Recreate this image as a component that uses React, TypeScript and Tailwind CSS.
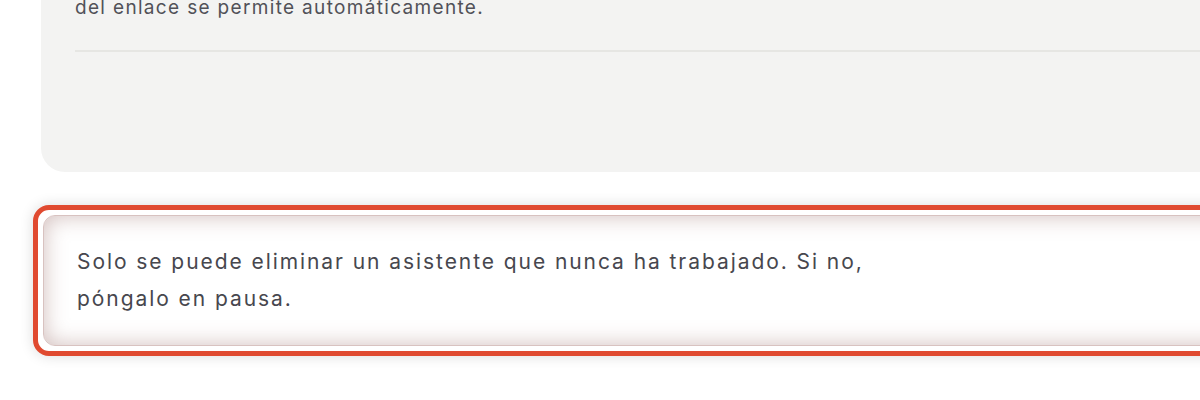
import React from 'react';

export default function App() {
  return (
    <div className="w-[1200px] h-[400px] overflow-hidden bg-white font-['Inter','Noto_Sans',sans-serif]">
      <div className="-mt-[40px] ml-[41px] w-[1240px] rounded-b-[24px] bg-[#f3f3f2] pt-[34px]">
        <div className="pl-[34px]">
          <p className="text-[19px] leading-[28px] tracking-[0.07em] text-[#515158]">
            del enlace se permite automáticamente.
          </p>
          <div className="mt-[28px] h-[2px] bg-[#e6e6e3]" />
          <div className="h-[120px]" />
        </div>
      </div>

      <div className="mt-[33px] ml-[33px] w-[1240px] rounded-[16px] border-[5px] border-[#e04a30] bg-white p-[5px] shadow-[0_0_14px_rgba(0,0,0,0.14)]">
        <div className="rounded-[12px] border border-[#d8c2c0] bg-white pt-[27px] pb-[28px] pl-[33px] shadow-[inset_0_0_22px_rgba(140,90,85,0.4)]">
          <p className="max-w-[830px] text-[21px] leading-[37px] tracking-[0.092em] text-[#47474e]">
            Solo se puede eliminar un asistente que nunca ha trabajado. Si no, póngalo en pausa.
          </p>
        </div>
      </div>
    </div>
  );
}
